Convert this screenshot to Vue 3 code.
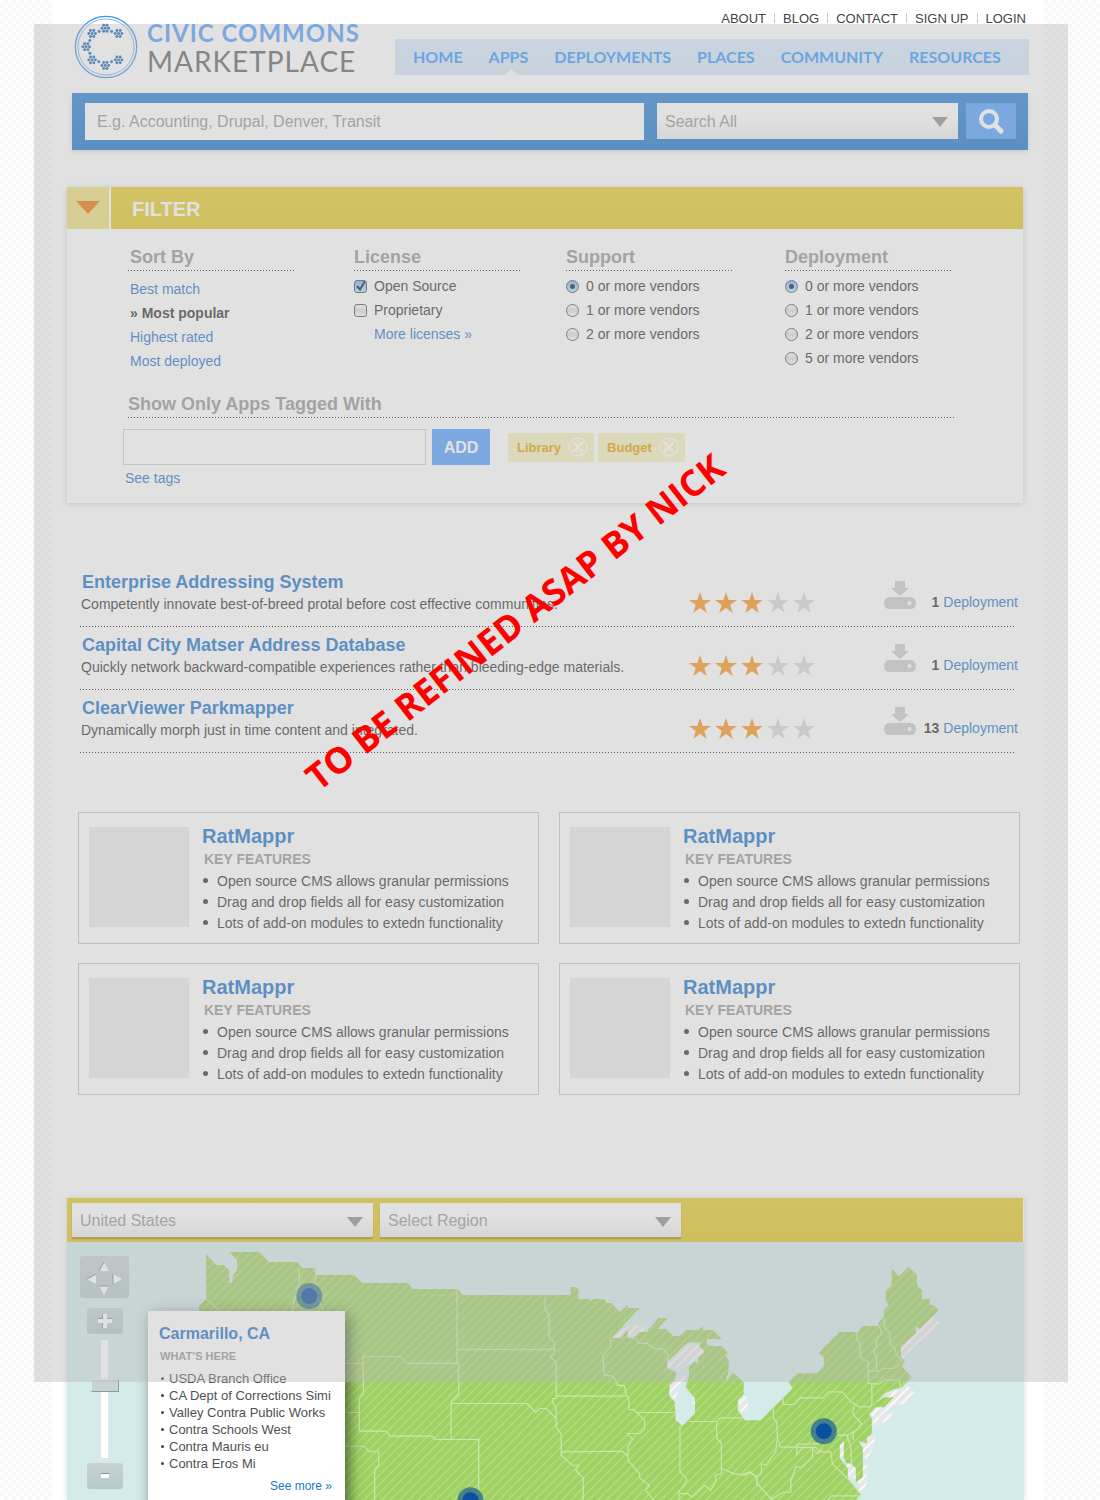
<script setup>
import { ref } from 'vue'

const topLinks = ['ABOUT', 'BLOG', 'CONTACT', 'SIGN UP', 'LOGIN']
const navLinks = ['HOME', 'APPS', 'DEPLOYMENTS', 'PLACES', 'COMMUNITY', 'RESOURCES']
const sortOptions = ['Best match', 'Most popular', 'Highest rated', 'Most deployed']
const licenses = ref([
  { name: 'Open Source', on: true },
  { name: 'Proprietary', on: false },
])
const support = ref(0)
const deployment = ref(0)
const tags = ['Library', 'Budget']
const zoomLevel = ref(63)

const results = [
  { name: 'Enterprise Addressing System', text: 'Competently innovate best-of-breed protal before cost effective communities.', stars: 3, count: 1 },
  { name: 'Capital City Matser Address Database', text: 'Quickly network backward-compatible experiences rather than bleeding-edge materials.', stars: 3, count: 1 },
  { name: 'ClearViewer Parkmapper', text: 'Dynamically morph just in time content and integrated.', stars: 3, count: 13 },
]
const features = [
  'Open source CMS allows granular permissions',
  'Drag and drop fields all for easy customization',
  'Lots of add-on modules to extedn functionality',
]
const places = [
  'USDA Branch Office',
  'CA Dept of Corrections Simi',
  'Valley Contra Public Works',
  'Contra Schools West',
  'Contra Mauris eu',
  'Contra Eros Mi',
]
const pins = [[309, 1296], [823, 1431], [470, 1500]]

// Logo: seven flowers of seven dots, joined by single dots
const petals = [[0, 0], [-10, 0], [10, 0], [-5, -9], [5, -9], [-5, 9], [5, 9]]
const flowers = [[106, 54], [66, 70], [146, 70], [48, 110], [66, 150], [106, 167], [146, 150]]
const links = [[87, 64], [125, 64], [59, 91], [59, 130], [86, 156], [125, 156]]
const logoDots = [
  ...flowers.flatMap(([x, y]) => petals.map(([dx, dy]) => [x + dx, y + dy])),
  ...links,
]
</script>

<template>
  <div class="page">
    <header class="header">
      <a class="brand" href="#">
        <svg class="logo" viewBox="12 14 192 194" aria-hidden="true">
          <g fill="none" stroke="#3f95ee">
            <circle cx="108" cy="111" r="93" stroke-width="4" />
            <circle cx="108" cy="111" r="85" stroke-width="3" opacity=".7" />
          </g>
          <circle v-for="(d, i) in logoDots" :key="i" :cx="d[0]" :cy="d[1]" r="4.500" fill="#1b6bb8" />
        </svg>
        <span class="wordmark">
          <span class="word-top">CIVIC COMMONS</span>
          <span class="word-bottom">MARKETPLACE</span>
        </span>
      </a>
      <div class="header-right">
        <div class="top-links">
          <a v-for="l in topLinks" :key="l" href="#">{{ l }}</a>
        </div>
        <nav class="nav">
          <a v-for="l in navLinks" :key="l" href="#" :class="{ active: l === 'APPS' }">{{ l }}</a>
        </nav>
      </div>
    </header>

    <form class="search" @submit.prevent>
      <input class="search-box" type="text" aria-label="Search" placeholder="E.g. Accounting, Drupal, Denver, Transit" />
      <span class="select">
        <select aria-label="Search in"><option>Search All</option></select>
      </span>
      <button class="search-button" type="submit" aria-label="Search">
        <svg width="28" height="28" viewBox="0 0 28 28" fill="none" stroke="#fff">
          <circle cx="12" cy="12" r="8" stroke-width="4" />
          <path d="M18 18L24 24" stroke-width="5" stroke-linecap="round" />
        </svg>
      </button>
    </form>

    <section class="filter">
      <div class="filter-head">
        <button class="toggle" type="button" aria-label="Collapse filter">
          <svg width="24" height="14" viewBox="0 0 24 14"><path d="M0 0H24L12 13Z" fill="#f2710a" /></svg>
        </button>
        <h2>FILTER</h2>
      </div>
      <div class="filter-body">
        <div class="columns">
          <div class="column">
            <h3>Sort By</h3>
            <ul class="sort">
              <li v-for="s in sortOptions" :key="s">
                <strong v-if="s === 'Most popular'">» {{ s }}</strong>
                <a v-else href="#">{{ s }}</a>
              </li>
            </ul>
          </div>
          <div class="column">
            <h3>License</h3>
            <label v-for="l in licenses" :key="l.name"><input v-model="l.on" type="checkbox" />{{ l.name }}</label>
            <a class="more" href="#">More licenses »</a>
          </div>
          <div class="column">
            <h3>Support</h3>
            <label v-for="n in [0, 1, 2]" :key="n"><input v-model="support" type="radio" name="support" :value="n" />{{ n }} or more vendors</label>
          </div>
          <div class="column">
            <h3>Deployment</h3>
            <label v-for="n in [0, 1, 2, 5]" :key="n"><input v-model="deployment" type="radio" name="deployment" :value="n" />{{ n }} or more vendors</label>
          </div>
        </div>
        <h3 class="tag-title">Show Only Apps Tagged With</h3>
        <div class="tag-row">
          <input class="tag-box" type="text" aria-label="Tag" />
          <button class="add" type="button">ADD</button>
          <span v-for="t in tags" :key="t" class="tag">
            {{ t }}
            <button type="button" :aria-label="'Remove ' + t">
              <svg width="20" height="20" viewBox="0 0 20 20" fill="none" stroke="#fff">
                <circle cx="10" cy="10" r="9" stroke-width="1.3" />
                <path d="M5 5L15 15M15 5L5 15" stroke-width="2" />
              </svg>
            </button>
          </span>
        </div>
        <a class="see-tags" href="#">See tags</a>
      </div>
    </section>

    <section class="results">
      <article v-for="r in results" :key="r.name" class="result">
        <div class="result-text">
          <h3><a href="#">{{ r.name }}</a></h3>
          <p>{{ r.text }}</p>
        </div>
        <div class="stars" role="img" :aria-label="r.stars + ' of 5 stars'">
          <svg v-for="n in 5" :key="n" width="22" height="21" viewBox="0 0 22 21">
            <path d="M11 0L13.7 8H22L15.300 12.900L17.800 21L11 16L4.200 21L6.700 12.900L0 8H8.300Z" :fill="n <= r.stars ? '#fc951e' : '#d8d8d8'" />
          </svg>
        </div>
        <svg class="download" width="32" height="28" viewBox="0 0 32 28" fill="#cbcbcb">
          <path d="M11 0H21V7H25L16 15L7 7H11Z" />
          <path fill-rule="evenodd" d="M6 16H26Q32 16 32 22Q32 28 26 28H6Q0 28 0 22Q0 16 6 16ZM25.500 20A2 2 0 1 0 25.500 24A2 2 0 1 0 25.500 20Z" />
        </svg>
        <p class="count"><b>{{ r.count }}</b> <a href="#">Deployment</a></p>
      </article>
    </section>

    <section class="cards">
      <article v-for="n in 4" :key="n" class="card">
        <div class="thumb"></div>
        <div>
          <h3><a href="#">RatMappr</a></h3>
          <h4>KEY FEATURES</h4>
          <ul>
            <li v-for="f in features" :key="f">{{ f }}</li>
          </ul>
        </div>
      </article>
    </section>

    <section class="places">
      <div class="places-head">
        <span class="select"><select aria-label="Country"><option>United States</option></select></span>
        <span class="select"><select aria-label="Region"><option>Select Region</option></select></span>
      </div>
      <div class="map">
        <svg class="map-art" viewBox="67 1242 956 258" preserveAspectRatio="xMidYMin slice" aria-hidden="true">
          <defs>
            <pattern id="hatch" width="9" height="9" patternUnits="userSpaceOnUse">
              <rect width="9" height="9" fill="#9fd263" />
              <path d="M-1 1L1 -1M0 9L9 0M8 10L10 8" stroke="#bfe092" stroke-width="1" />
            </pattern>
            <pattern id="coast" width="9" height="9" patternUnits="userSpaceOnUse">
              <rect width="9" height="9" fill="#e7e7e7" />
              <path d="M-1 1L1 -1M0 9L9 0M8 10L10 8" stroke="#fff" stroke-width="1.500" />
            </pattern>
          </defs>
          <g fill="url(#coast)">
            <path d="M611 1338L629 1325H642L627 1338ZM627 1338L642 1325L645 1330L632 1340ZM723 1382V1374L732 1370L728 1382ZM737 1400L747 1396V1408L741 1415Z" />
            <path d="M900 1347L932 1317L940 1323L923 1344L919 1341L901 1359ZM868 1412L890 1390H898L906 1384L914 1393L905 1404H895L875 1419ZM872 1430V1420L886 1413H896L886 1422H880ZM866 1438L874 1433V1446L865 1460L861 1448ZM862 1466L866 1463V1483L860 1495L857 1482ZM839 1441H844V1457L839 1456ZM845 1462L855 1468V1479L848 1476Z" />
          </g>
          <path
            fill="url(#hatch)"
            d="M206 1254L216 1265H223L229 1270V1283H232L233 1275L237 1270V1260L229 1252H259L269 1262H297L302 1268H315V1275H354L362 1283H407L413 1289H457L463 1295H570V1287H575L578 1290V1299H589L590 1301L593 1299H603L607 1303H611L619 1312L627 1305V1308H639L611 1338H620L627 1330V1338H632L639 1332H646L658 1318H667L657 1329H665L673 1336H679L685 1330H698L702 1326V1330H712L721 1339H706V1344L708 1346H721L727 1353L725 1356L728 1360V1371L725 1381L732 1372L743 1382V1394L737 1400V1410L744 1420H760L792 1388L788 1382L797 1373H816L823 1366V1357L818 1353L839 1332H857L862 1326H877L878 1322L883 1317V1310L888 1305L885 1301V1291L891 1285V1269L898 1276L908 1267L916 1275V1285L921 1290V1299H929V1305H932L938 1310L919 1329L915 1326V1333L900 1347V1357L904 1361L901 1366L911 1377L901 1387L893 1389L884 1393L876 1402L883 1397H893L883 1407H875L868 1414L871 1418V1434L866 1438V1443L858 1441L862 1448V1477L855 1482V1468L850 1463H845L843 1457V1441L839 1445V1458L847 1468V1478L860 1494L855 1500H206V1320L199 1312V1306L206 1299Z"
          />
          <g transform="translate(400 1180) scale(.33333)">
            <path fill="#d4ebea" d="M862 487H905L893 498L912 515L893 530V550L880 545L865 560V590L855 620L883 655V700L845 738L825 718L822 665L807 650V615L825 605V575L800 565V545Z" />
          </g>
          <path fill="url(#coast)" d="M667 1362L684 1345H698L704 1352L698 1357L676 1372L675 1367L683 1359H678L667 1369ZM669 1385L678 1376H687L683 1382L679 1385L675 1400L669 1396ZM690 1402L694 1396V1405ZM675 1417L678 1419L676 1421Z" />
          <g fill="none" stroke="#cde6ae" stroke-width="3.500">
            <path transform="translate(60 1180) scale(.33333)" d="M717 265V315L700 365L697 393M765 285V340L790 393M440 358L472 385V393M855 550H908V530H1022L1040 550H1195M908 550L910 640L897 655V753H977L990 768H1115L1125 778H1255V930M855 697H897M855 798H912L925 813H955V855L943 868V960" />
            <path transform="translate(400 1180) scale(.33333)" d="M170 330V548L175 550V640L152 665V778M170 508H462M152 670H380L405 697L418 685H437L467 715M434 350V390L446 405V470L462 488V515L450 530L467 548V655H457V668L467 685V740L482 762V825L515 855H535L525 870L548 893V960M467 648H675M630 473V500L607 525L611 585L635 587L650 605V615L672 617L677 645L685 655V688H700L732 720V745L717 760H680L697 778L682 798V840L717 880V893L747 915L735 930L760 960M482 815L665 813L682 828M703 473L715 490H742L760 505L790 507L802 525V545M705 697H820M838 738V875L857 893V905L835 935V960M865 724H948V775L962 788V880L945 885V905L930 930L912 915L875 950L860 940H838M948 724L960 713H1025M962 865L1000 880L1035 885L1048 875L1068 890V910L1080 920" />
            <path transform="translate(740 1180) scale(.33333)" d="M98 685V715L108 725L110 770L118 800L225 802L240 815H270L275 850L330 905L360 943M127 655V673H160L180 653H247L263 635H305L330 665L355 680H388L393 672V612M347 455V475L358 490V530L382 545V610L415 612L430 600H475L478 620M412 430L423 460L407 480V500L398 515L407 530V573M383 573H415L425 565H460L480 550M430 415V440L447 460V490L463 505L465 520L485 545M340 680L335 700L362 730L350 747L320 765H290M318 765L330 800L332 850M240 790L168 792V825L185 802H215V830L185 860H165L150 905V935L125 937L93 957L48 910V890L25 875L0 885M108 780L105 815L75 855L62 850V880L48 890M260 960L272 947H360M337 755V780M210 800L230 820L245 805" />
          </g>
          <g v-for="(p, i) in pins" :key="i" fill="#0a4fa0">
            <circle :cx="p[0]" :cy="p[1]" r="13" opacity=".62" />
            <circle :cx="p[0]" :cy="p[1]" r="8" />
          </g>
        </svg>

        <div class="controls">
          <button class="pan" type="button" aria-label="Pan map">
            <svg width="37" height="37" viewBox="0 0 37 37">
              <path d="M18 3L23 12H13ZM18 36L13 27H23ZM1 20L10 15V25ZM36 20L27 15V25Z" fill="#fff" />
              <path d="M13 12L18 3M13 27H23M1 20L10 15M27 25V15" fill="none" stroke="#7f8f90" />
            </svg>
          </button>
          <button class="step" type="button" aria-label="Zoom in">
            <svg width="16" height="16" viewBox="0 0 16 16"><path d="M7 1V15M1 7H15" stroke="#7f8f90" stroke-width="4" /><path d="M8 1V15M1 8H15" stroke="#fff" stroke-width="4" /></svg>
          </button>
          <input v-model="zoomLevel" class="zoom" type="range" min="0" max="100" aria-label="Zoom level" />
          <button class="step" type="button" aria-label="Zoom out">
            <svg width="16" height="16" viewBox="0 0 16 16"><path d="M4 7H12" stroke="#7f8f90" stroke-width="4" /><path d="M4 8H12" stroke="#fff" stroke-width="4" /></svg>
          </button>
        </div>

        <aside class="popup">
          <h3><a href="#">Carmarillo, CA</a></h3>
          <h4>WHAT’S HERE</h4>
          <ul>
            <li v-for="p in places" :key="p">{{ p }}</li>
          </ul>
          <a class="see-more" href="#">See more »</a>
        </aside>
      </div>
    </section>

    <div class="veil"></div>
    <p class="stamp">TO BE REFINED ASAP BY NICK</p>
  </div>
</template>

<style>
body {
  background: repeating-conic-gradient(#f7f7f7 0 25%, #fdfdfd 0 50%) 0 0 / 8px 8px;
}
#app {
  position: relative;
  overflow: hidden;
}
</style>

<style scoped>
.page {
  box-sizing: border-box;
  margin: 0 56px 0 52px;
  background: #fff;
  color: #333;
  font: 14px/21px "Liberation Sans", Arial, sans-serif;
}
h2, h3, h4, p, ul { margin: 0; padding: 0; }
ul { list-style: none; }
a { color: #1d75cb; text-decoration: none; }
button { padding: 0; border: 0; font: inherit; cursor: pointer; }
input, select { box-sizing: border-box; margin: 0; font: inherit; }

.header { display: flex; height: 93px; padding: 0 15px 0 22px; }
.brand { display: flex; flex: none; width: 321px; padding-top: 15px; box-sizing: border-box; }
.logo { width: 64px; height: 64px; }
.wordmark { display: flex; flex-direction: column; margin-left: 9px; font-family: Lato, sans-serif; }
.word-top { padding-top: 4px; color: #53a0fa; font-size: 24px; font-weight: 700; line-height: 28px; letter-spacing: 1px; }
.word-bottom { color: #646464; font-size: 28px; line-height: 28px; letter-spacing: 1px; }
.header-right { flex: 1; }
.top-links { display: flex; justify-content: flex-end; padding-right: 3px; height: 39px; font-size: 13px; line-height: 38px; }
.top-links a { color: #444; }
.top-links a + a::before { content: ""; display: inline-block; width: 1px; height: 10px; margin: 0 8px; background: #ccc; }
.nav { display: flex; gap: 26px; padding: 0 18px; height: 36px; background: linear-gradient(#d8ebfb, #d6e3f7); font: 700 16px/36px Lato, sans-serif; }
.nav a { position: relative; color: #369aff; }
.nav .active::after { content: ""; position: absolute; bottom: 0; left: 50%; margin-left: -3px; border: 6px solid transparent; border-top: 0; border-bottom-color: #fff; }

.search { display: flex; align-items: flex-start; gap: 8px; margin: 0 16px 0 20px; padding: 10px 12px 10px 13px; background: linear-gradient(#2c80d5, #1d75c9); box-shadow: 0 2px 5px rgba(0, 0, 0, .15); }
.search-box { flex: 1; margin-right: 5px; height: 37px; padding: 0 12px; border: 0; background: #fff; font-size: 16px; }
.search-box::placeholder { color: #969696; opacity: 1; }
.search-button { display: grid; place-items: center; width: 50px; height: 36px; background: #539ffa; }
.select { position: relative; width: 301px; }
.select select { display: block; width: 100%; height: 36px; padding: 0 8px; border: 0; border-radius: 0; appearance: none; background: linear-gradient(#fff 40%, #ebebeb); color: #969696; font-size: 16px; }
.select::after { content: ""; position: absolute; right: 10px; top: 14px; border: 8px solid transparent; border-top: 10px solid #909090; border-bottom: 0; pointer-events: none; }

.filter { margin: 37px 21px 0 15px; background: #fff; box-shadow: 0 1px 6px rgba(0, 0, 0, .2); }
.filter-head { display: flex; gap: 2px; height: 42px; }
.toggle { width: 42px; background: #eedf7d; }
.toggle svg { display: block; margin: 0 auto; }
.filter-head h2 { flex: 1; padding-left: 21px; background: linear-gradient(#e7cc2c, #e0c623); color: #fff; font-size: 20px; line-height: 44px; }
.filter-body { padding: 17px 60px 14px 61px; }
.columns { display: grid; grid-template-columns: 226fr 212fr 219fr 178fr; min-height: 147px; }
.filter-body h3 {
  padding: 0 0 3px;
  background: repeating-linear-gradient(90deg, #222 0 1px, transparent 1px 3px) 0 100% / 100% 1px no-repeat;
  color: #969696;
  font-size: 18px;
  line-height: 22px;
}
.column h3 { width: 168px; margin-bottom: 3px; }
.sort { padding: 3px 0 0 2px; }
.sort li, .column label, .more { line-height: 24px; }
.column:first-child h3 { text-indent: 2px; }
.column label { display: flex; align-items: center; gap: 7px; }
.column input { appearance: none; width: 13px; height: 13px; border: 1px solid #555; border-radius: 3px; background: linear-gradient(#fff, #ddd, #fff); }
.column input[type="radio"] { border-radius: 50%; }
.column input:checked { border-color: #40566e; background: linear-gradient(#9cc0ea, #a8e0ff); }
.column input[type="radio"]:checked { background: radial-gradient(circle, #0b2440 2px, transparent 3px), linear-gradient(#7fb0e8, #b0eaff); }
.column input[type="checkbox"]:checked { background: url("data:image/svg+xml,%3Csvg xmlns='http://www.w3.org/2000/svg' viewBox='0 0 11 11'%3E%3Cpath d='M2 5L5 8.500L10 0' fill='none' stroke='%23102030' stroke-width='2'/%3E%3C/svg%3E"), linear-gradient(#7fb0e8, #b0eaff); }
.more { display: block; padding-left: 20px; }
.filter-body .tag-title { margin-right: 8px; }
.tag-row { display: flex; align-items: center; gap: 4px; margin: 11px 0 0 -5px; }
.tag-box { width: 303px; height: 36px; margin-right: 2px; border: 1px solid #ccc; background: #fff; }
.add { width: 58px; height: 36px; margin-right: 14px; background: #539ffa; color: #fff; font-size: 16px; font-weight: 700; }
.tag { display: flex; align-items: center; justify-content: space-between; gap: 7px; height: 29px; padding: 0 6px 0 9px; background: #f7f0bd; color: #e1a200; font-size: 13px; font-weight: 700; }
.tag button { display: flex; background: none; }
.see-tags { display: block; margin: 3px 0 0 -3px; }

.results { margin: 61px 29px 0 28px; }
.result {
  display: flex;
  height: 63px;
  background: repeating-linear-gradient(90deg, #222 0 1px, transparent 1px 3px) 0 100% / 100% 1px no-repeat;
}
.result-text { flex: 1; padding: 6px 0 0 1px; }
.result h3 { font-size: 18px; line-height: 24px; padding-left: 1px; }
.stars { display: flex; gap: 4px; padding-top: 28px; }
.download { margin: 17px 0 0 69px; }
.count { width: 102px; margin: 28px -3px 0 0; text-align: right; white-space: nowrap; }

.cards { display: grid; grid-template-columns: 1fr 1fr; gap: 19px 20px; margin: 59px 24px 0 26px; }
.card { display: flex; gap: 13px; height: 132px; padding: 14px 10px; border: 1px solid #c3c3c3; box-sizing: border-box; }
.thumb { flex: none; width: 100px; height: 100px; background: #ebebeb; }
.card h3 { margin-top: -3px; font-size: 20px; line-height: 24px; }
.card h4 { padding-left: 2px; color: #969696; font-size: 14px; line-height: 23px; }
.card li, .popup li { position: relative; white-space: nowrap; }
.card li { padding-left: 15px; }
.card li::before { content: ""; position: absolute; left: 1px; top: 7px; width: 5px; height: 5px; border-radius: 50%; background: #333; }

.places { margin: 103px 20px 0 15px; box-shadow: 0 0 6px rgba(0, 0, 0, .15); }
.places-head { display: flex; gap: 7px; margin-right: 1px; padding: 5px; background: linear-gradient(#e4ca2b, #dfc423); }
.places-head select { height: 34px; box-shadow: 0 2px 1px rgba(90, 70, 0, .4); }
.map { position: relative; height: 258px; overflow: hidden; background: #d4ebea; }
.map-art { display: block; width: 100%; height: 258px; }
.controls { position: absolute; top: 14px; left: 13px; display: flex; flex-direction: column; align-items: center; width: 49px; }
.pan, .step { display: grid; place-items: center; border-radius: 3px; background: linear-gradient(#c6d2d2, #b5c9cb); }
.pan { width: 49px; height: 42px; margin-bottom: 10px; }
.step { width: 36px; height: 26px; }
.zoom { appearance: none; writing-mode: vertical-lr; direction: rtl; width: 28px; height: 118px; margin: 6px 0 5px; background: linear-gradient(#fff, #fff) 50% 0 / 7px 100% no-repeat; }
.zoom::-webkit-slider-thumb { appearance: none; box-sizing: border-box; width: 28px; height: 13px; border: 1px solid #8d9a9a; border-top-color: #dfe8e8; border-left-color: #dfe8e8; background: #c6d3d3; }
.popup { position: absolute; top: 69px; left: 81px; box-sizing: border-box; width: 197px; height: 220px; padding: 12px 13px 0 11px; background: #fff; box-shadow: 4px 4px 14px rgba(0, 0, 0, .55); }
.popup h3 { font-size: 16px; line-height: 22px; }
.popup h4 { padding: 0 0 3px 1px; color: #969696; font-size: 11px; line-height: 22px; }
.popup li { padding-left: 10px; color: #505050; font-size: 13px; line-height: 17px; }
.popup li::before { content: ""; position: absolute; left: 2px; top: 7px; width: 3px; height: 3px; border-radius: 50%; background: #444; }
.see-more { display: block; margin-top: 4px; font-size: 12px; line-height: 21px; text-align: right; }

.veil { position: absolute; top: 24px; left: 34px; right: 32px; bottom: 118px; background: rgba(181, 181, 181, .41); pointer-events: none; }
.stamp { position: absolute; top: 622px; left: 515px; transform: translate(-50%, -50%) rotate(-38deg); color: #f00; font: 700 36px/40px "Open Sans", sans-serif; white-space: nowrap; pointer-events: none; }
</style>
